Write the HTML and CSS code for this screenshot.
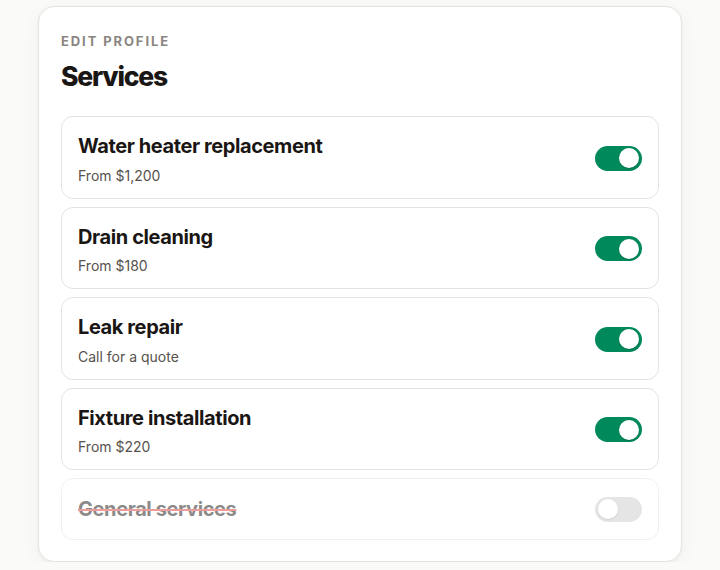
FILE: index.html
```html
<!DOCTYPE html>
<html lang="en">
<head>
<meta charset="utf-8">
<title>Edit profile – Services</title>
<link rel="stylesheet" href="styles.css">
</head>
<body>
<main class="card">
  <header class="card-head">
    <div class="eyebrow">EDIT PROFILE</div>
    <h1 class="title">Services</h1>
  </header>
  <ul class="services">
    <li class="service">
      <div class="service-text">
        <div class="service-name">Water heater replacement</div>
        <div class="service-price">From $1,200</div>
      </div>
      <span class="toggle on" role="switch" aria-checked="true"><span class="knob"></span></span>
    </li>
    <li class="service">
      <div class="service-text">
        <div class="service-name">Drain cleaning</div>
        <div class="service-price">From $180</div>
      </div>
      <span class="toggle on" role="switch" aria-checked="true"><span class="knob"></span></span>
    </li>
    <li class="service">
      <div class="service-text">
        <div class="service-name">Leak repair</div>
        <div class="service-price">Call for a quote</div>
      </div>
      <span class="toggle on" role="switch" aria-checked="true"><span class="knob"></span></span>
    </li>
    <li class="service">
      <div class="service-text">
        <div class="service-name">Fixture installation</div>
        <div class="service-price">From $220</div>
      </div>
      <span class="toggle on" role="switch" aria-checked="true"><span class="knob"></span></span>
    </li>
    <li class="service disabled">
      <div class="service-text">
        <div class="service-name struck">General services</div>
      </div>
      <span class="toggle off" role="switch" aria-checked="false"><span class="knob"></span></span>
    </li>
  </ul>
</main>
</body>
</html>
```

FILE: styles.css
```css
* { box-sizing: border-box; }

html, body {
  margin: 0;
  padding: 0;
}

body {
  background: #fafaf9;
  padding: 6px 38px 0;
  font-family: Inter, "Noto Sans", "Liberation Sans", sans-serif;
  color: #1a1614;
}

.card {
  background: #ffffff;
  border: 1px solid #e6e3df;
  border-radius: 16px;
  padding: 22px 22px 21px;
  box-shadow: 0 1px 3px rgba(0,0,0,0.04), 0 6px 20px rgba(0,0,0,0.04);
}

.card-head {
  display: flex;
  flex-direction: column;
  gap: 10px;
  margin-bottom: 23px;
}

.eyebrow {
  font-size: 13px;
  line-height: 16px;
  font-weight: 700;
  letter-spacing: 1.9px;
  color: #8a857f;
  padding-top: 4px;
}

.title {
  margin: 0;
  font-size: 26.5px;
  line-height: 34px;
  font-weight: 800;
  letter-spacing: -1.2px;
  color: #1a1614;
}

.services {
  list-style: none;
  margin: 0;
  padding: 0;
  display: flex;
  flex-direction: column;
  gap: 8px;
}

.service {
  display: flex;
  align-items: center;
  justify-content: space-between;
  border: 1px solid #e6e3df;
  border-radius: 12px;
  padding: 15px 16px 13px;
  background: #fff;
}

.service-text {
  display: flex;
  flex-direction: column;
  gap: 6.5px;
}

.service-name {
  font-size: 20px;
  line-height: 28px;
  font-weight: 750;
  letter-spacing: -0.4px;
  color: #1a1614;
}

.service-price {
  font-size: 14px;
  line-height: 18px;
  color: #57524d;
}

.toggle {
  position: relative;
  display: inline-block;
  width: 47px;
  height: 25px;
  border-radius: 13px;
  flex: none;
}

.toggle.on { background: #008a5c; }
.toggle.off { background: #cccccc; }

.knob {
  position: absolute;
  top: 2.5px;
  width: 20px;
  height: 20px;
  border-radius: 50%;
  background: #ffffff;
  box-shadow: 0 1px 2px rgba(0,0,0,0.2);
}

.toggle.on .knob { right: 3px; }
.toggle.off .knob { left: 3px; }

.service.disabled {
  opacity: 0.5;
  padding-top: 16px;
  padding-bottom: 16px;
}

.struck {
  text-decoration: line-through;
  text-decoration-color: #dc3b3b;
  text-decoration-thickness: 2px;
}
```
